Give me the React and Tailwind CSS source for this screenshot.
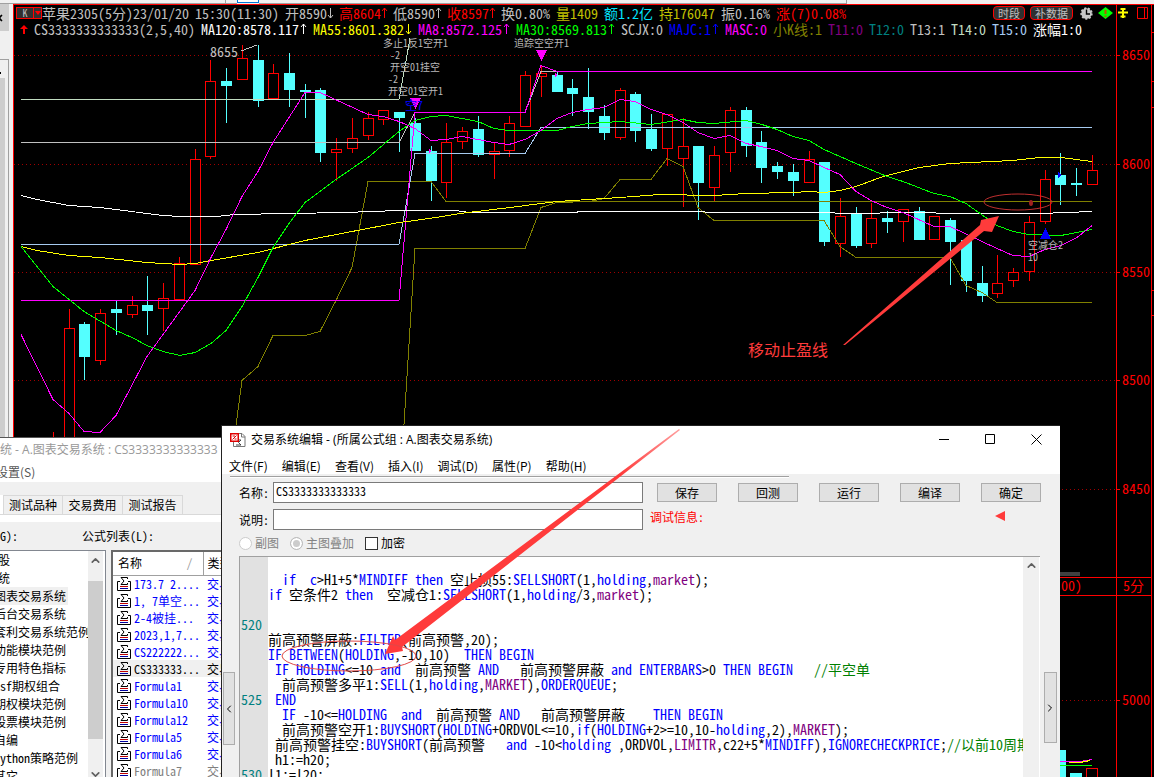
import React from 'react';
import { ChevronDown, ChevronLeft, ChevronRight, ChevronUp, X } from 'lucide-react';

// [centre x, body top, body bottom, high, low, rising]
const candles = [
  [53, 440, 440, 432, 440, 1], [69, 328, 440, 309, 440, 1], [84, 324, 357, 322, 380, 0],
  [100, 313, 361, 309, 365, 1], [116, 309, 313, 301, 335, 0], [132, 305, 315, 296, 318, 1],
  [147, 305, 311, 276, 335, 0], [163, 298, 309, 283, 331, 1], [179, 263, 300, 257, 300, 1],
  [195, 159, 265, 149, 265, 1], [210, 81, 157, 60, 159, 1], [226, 81, 86, 68, 123, 0],
  [242, 58, 80, 45, 80, 1], [258, 60, 101, 45, 107, 0], [273, 73, 99, 64, 99, 1],
  [289, 73, 90, 53, 107, 0], [305, 90, 92, 84, 118, 0], [320, 90, 153, 88, 162, 0],
  [336, 149, 153, 138, 181, 1], [352, 138, 149, 118, 153, 1], [368, 118, 136, 112, 140, 1],
  [383, 110, 120, 110, 125, 1], [399, 112, 118, 112, 152, 0], [415, 123, 151, 118, 151, 0],
  [431, 151, 181, 146, 201, 0], [446, 142, 183, 123, 198, 1], [462, 131, 142, 127, 149, 1],
  [478, 129, 155, 116, 157, 0], [494, 151, 155, 143, 179, 1], [509, 123, 151, 116, 157, 1],
  [525, 75, 127, 71, 127, 1], [541, 73, 77, 65, 97, 1], [557, 75, 92, 71, 92, 0],
  [572, 88, 94, 79, 116, 0], [588, 97, 112, 68, 129, 0], [604, 116, 133, 105, 140, 0],
  [620, 90, 138, 88, 140, 1], [635, 94, 131, 92, 142, 0], [651, 129, 149, 114, 151, 0],
  [667, 114, 149, 114, 166, 1], [683, 146, 159, 118, 207, 1], [698, 146, 183, 146, 220, 0],
  [714, 155, 188, 146, 201, 1], [730, 110, 153, 107, 172, 1], [746, 110, 146, 107, 157, 0],
  [761, 142, 168, 131, 183, 0], [777, 166, 172, 162, 179, 0], [793, 172, 181, 164, 196, 0],
  [809, 159, 183, 151, 183, 1], [824, 162, 242, 162, 246, 0], [840, 216, 244, 198, 257, 1],
  [856, 214, 246, 207, 248, 0], [871, 218, 244, 203, 248, 1], [887, 218, 222, 211, 233, 0],
  [903, 209, 222, 209, 242, 1], [919, 211, 240, 207, 240, 0], [934, 216, 240, 216, 240, 1],
  [950, 220, 242, 218, 285, 0], [966, 240, 281, 240, 292, 0], [982, 283, 296, 266, 302, 0],
  [997, 283, 294, 255, 298, 1], [1013, 272, 281, 268, 287, 1], [1029, 222, 272, 216, 281, 1],
  [1045, 179, 222, 170, 224, 1], [1060, 175, 185, 153, 205, 0], [1076, 183, 185, 168, 196, 0],
  [1092, 170, 185, 155, 185, 1],
];

const lines = [
  { color: '#808000', points: '234,440 242,380 258,366 273,335 305,335 320,331 336,300 352,267 368,181 431,181 446,201 1092,201' },
  { color: '#808000', points: '403,440 415,248 525,248 541,207 557,202 590,201 604,198 620,179 651,179 667,158 683,166 698,207 714,220 824,220 840,246 856,257 950,257 966,285 982,292 997,302 1092,302' },
  { color: '#c0dcc0', points: '21,99 399,99 410,38' },
  { color: '#c0c0c0', points: '21,142 399,142 415,112' },
  { color: '#c0c0c0', points: '525,112 541,71 557,71' },
  { color: '#a6caf0', points: '21,244 399,244 415,153 525,153 541,127 1092,127' },
  { color: '#ff00ff', points: '21,300 399,300 415,112 525,112 541,65 557,71 1092,71' },
  { color: '#ffffff', points: '21,195 37,199 69,205 100,207 163,215 180,216 217,216 234,214 345,212 399,210 455,210 470,212 690,211 720,212 830,212 840,213 870,213 890,212 980,213 1040,213 1092,211' },
  { color: '#ffff00', points: '21,246 37,250 69,255 100,257 147,262 180,264 195,263 211,260 258,252 305,240 352,231 399,222 415,220 436,217 460,213 510,207 541,203 557,201 620,197 660,194 714,195 746,193 793,192 809,191 824,192 840,190 856,186 883,176 919,167 950,163 1013,160 1040,157 1061,157 1092,161' },
  { color: '#00ff00', points: '21,246 53,286 84,311 116,330 132,337 147,345 163,351 180,355 195,352 211,343 226,330 242,306 258,277 273,247 289,223 305,202 336,179 368,157 399,131 415,120 431,116 446,115 478,121 494,128 509,130 557,130 572,126 588,123 620,121 651,124 683,119 698,122 714,123 746,120 762,124 777,129 793,136 809,140 824,149 856,163 887,176 903,181 934,193 950,196 966,203 997,225 1013,231 1029,234 1061,235 1092,229' },
  { color: '#ff00ff', points: '21,334 53,399 69,413 84,431 100,432 116,415 147,356 163,334 195,290 211,257 226,229 242,196 258,171 273,142 289,117 305,92 320,92 368,114 383,116 399,121 415,128 431,140 446,139 462,136 478,139 494,142 509,144 525,139 541,130 557,118 572,112 588,109 604,107 620,99 635,101 651,109 667,114 683,122 698,132 714,138 730,135 746,143 761,146 777,150 793,158 809,160 824,167 840,174 856,191 871,200 887,207 903,212 934,226 950,226 997,248 1013,255 1029,256 1045,249 1061,245 1077,237 1092,225' },
];

const prices = [[8650, 55], [8600, 164], [8550, 272], [8500, 380], [8450, 489], [5000, 700]];

const notes = [
  [383, 47, '多止1反1空开1'], [390, 59, '-2'], [390, 71, '开空01挂空'], [388, 83, '-2'],
  [388, 95, '开空01空开1'], [514, 47, '追踪空空开1'], [1028, 249, '空减仓2'], [1028, 261, '10'],
];

const quote = [
  { text: '苹果2305(5分)', color: 'text-[#c0c0c0] -mr-1.5' },
  { text: '23/01/20', color: 'text-[#c0c0c0]' },
  { text: '15:30(11:30)', color: 'text-[#c0c0c0]' },
  { text: '开8590', color: 'text-[#c0c0c0]', arrow: 'down' },
  { text: '高8604', color: 'text-[#ff0000]', arrow: 'up' },
  { text: '低8590', color: 'text-[#c0c0c0]', arrow: 'up' },
  { text: '收8597', color: 'text-[#ff0000]', arrow: 'up' },
  { text: '换0.80%', color: 'text-[#c0c0c0]' },
  { text: '量1409', color: 'text-[#c0c000]' },
  { text: '额1.2亿', color: 'text-[#00e5ff]' },
  { text: '持176047', color: 'text-[#c0c000]' },
  { text: '振0.16%', color: 'text-[#c0c0c0]' },
  { text: '涨(7)0.08%', color: 'text-[#ff0000]' },
];

const indicators = [
  { text: 'CS3333333333333(2,5,40)', color: 'text-[#c0c0c0]' },
  { text: 'MA120:8578.117', color: 'text-white', arrow: 'up' },
  { text: 'MA55:8601.382', color: 'text-[#ffff00]', arrow: 'down' },
  { text: 'MA8:8572.125', color: 'text-[#ff00ff]', arrow: 'up' },
  { text: 'MA30:8569.813', color: 'text-[#00ff00]', arrow: 'up' },
  { text: 'SCJX:0', color: 'text-[#c0c0c0]' },
  { text: 'MAJC:1', color: 'text-[#0000ff]', arrow: 'up' },
  { text: 'MASC:0', color: 'text-[#ff00ff]' },
  { text: '小K线:1', color: 'text-[#808000]' },
  { text: 'T11:0', color: 'text-[#800080]' },
  { text: 'T12:0', color: 'text-[#008080]' },
  { text: 'T13:1', color: 'text-[#c0c0c0]' },
  { text: 'T14:0', color: 'text-[#c0dcc0]' },
  { text: 'T15:0', color: 'text-[#a6caf0]' },
  { text: '涨幅1:0', color: 'text-white' },
];

const groups = ['图表交易系统', '后台交易系统', '套利交易系统范例', '功能模块范例', '专用特色指标', 'Csf期权组合', '期权模块范例', '股票模块范例', '自编', 'Python策略范例', '其它'];

const formulas = ['173.7 2....', '1, 7单空...', '2-4被挂...', '2023,1,7...', 'CS222222...', 'CS333333...', 'Formula1', 'Formula10', 'Formula12', 'Formula5', 'Formula6', 'Formula7'];

const code = [
  '',
  '  if  c>H1+5*MINDIFF then 空止损55:SELLSHORT(1,holding,market);',
  'if 空条件2 then  空减仓1:SELLSHORT(1,holding/3,market);',
  '',
  '',
  '前高预警屏蔽:FILTER(前高预警,20);',
  'IF BETWEEN(HOLDING,-10,10)  THEN BEGIN',
  ' IF HOLDING<=10 and  前高预警 AND   前高预警屏蔽 and ENTERBARS>0 THEN BEGIN   //平空单',
  '  前高预警多平1:SELL(1,holding,MARKET),ORDERQUEUE;',
  ' END',
  '  IF -10<=HOLDING  and  前高预警 AND   前高预警屏蔽    THEN BEGIN',
  '  前高预警空开1:BUYSHORT(HOLDING+ORDVOL<=10,if(HOLDING+2>=10,10-holding,2),MARKET);',
  ' 前高预警挂空:BUYSHORT(前高预警   and -10<holding ,ORDVOL,LIMITR,c22+5*MINDIFF),IGNORECHECKPRICE;//以前10周期',
  ' h1:=h20;',
  'l1:=l20;',
];

const FIRST_LINE = 516;
const blueWords = ['if', 'c', 'then', 'mindiff', 'sellshort', 'holding', 'filter', 'between', 'begin', 'and', 'enterbars', 'sell', 'orderqueue', 'end', 'buyshort', 'ignorecheckprice'];
const purpleWords = ['market', 'limitr'];

function tokenColor(token) {
  const word = token.toLowerCase();
  if (token.startsWith('//')) return 'text-[#008000]';
  if (blueWords.includes(word)) return 'text-[#0000ff]';
  if (purpleWords.includes(word)) return 'text-[#800080]';
  return 'text-black';
}

function CodeLine({ text }) {
  const tokens = text.match(/\/\/.*|[A-Za-z][A-Za-z0-9]*|[^A-Za-z/]+|\//g) || [];
  return (
    <div className="h-[15px]">
      {tokens.map((token, i) => (
        <span key={i} className={tokenColor(token)}>{token}</span>
      ))}
    </div>
  );
}

function TrendArrow({ dir, className }) {
  return (
    <svg viewBox="0 0 6 12" className={`${className} h-3 overflow-visible`} fill="none" stroke="currentColor">
      <path d={dir === 'up' ? 'M3.5 11V1M1 4L3.5 1L6 4' : 'M3.5 1V11M1 8L3.5 11L6 8'} />
    </svg>
  );
}

function DataRow({ items, arrowClass }) {
  return items.map((item) => (
    <span key={item.text} className={`flex items-center whitespace-pre ${item.color}`}>
      {item.text}
      {item.arrow && <TrendArrow dir={item.arrow} className={arrowClass} />}
    </span>
  ));
}

function ChartCanvas() {
  return (
    <svg viewBox="14 5 1140 772" preserveAspectRatio="xMinYMin slice" className="block w-full h-full [grid-area:1/1]" shapeRendering="crispEdges">
      {prices.map(([price, y]) => (
        <g key={price}>
          <line x1="14" x2="1116" y1={y + 0.5} y2={y + 0.5} stroke="#a00000" strokeDasharray="1 3" />
          <line x1="1116" x2="1120" y1={y + 0.5} y2={y + 0.5} stroke="#ff0000" />
          <text x="1122" y={y + 5} fontSize="14" fill="#ff0000">{price}</text>
        </g>
      ))}

      {candles.map(([x, top, bottom, high, low, up]) => (
        <g key={x} stroke={up ? '#ff0000' : '#54ffff'} fill={up ? '#000' : '#54ffff'}>
          <line x1={x + 0.5} x2={x + 0.5} y1={high} y2={low} />
          {bottom > top && <rect x={x - 4.5} y={top + 0.5} width="10" height={Math.max(bottom - top - 1, 1)} />}
        </g>
      ))}

      <g fill="none">
        {lines.map((line) => (
          <polyline key={line.points} points={line.points} stroke={line.color} transform="translate(0 0.5)" />
        ))}
      </g>

      <line x1="241" y1="51" x2="257" y2="45" stroke="#c0c0c0" />
      <text x="210" y="57" fontSize="14" fill="#c0c0c0">8655</text>
      <g fill="#b8b8b8" fontSize="10">
        {notes.map(([x, y, text]) => (
          <text key={`${x}-${y}`} x={x} y={y}>{text}</text>
        ))}
      </g>
      <polygon points="536,50 547,50 541.5,61" fill="#ff00ff" />
      <polygon points="410,98 421,98 415.5,109" fill="#ff00ff" />
      <text x="405" y="110" fontSize="12" fill="#0000ff">空7</text>
      <polygon points="429,149 432,151 429,153" fill="#ff00ff" />
      <polygon points="555,73 558,75 555,77" fill="#ff00ff" />
      <polygon points="1040,239 1051,239 1045.5,228" fill="#0000ff" />
      <polygon points="1058,172 1061,175 1058,178" fill="#0000ff" />

      {/* Axis frame */}
      <g stroke="#ff0000">
        <path d="M1116.5 5V777M1151.5 5V777" />
        <path d="M1151 32.5H1154M1151 81.5H1154M1151 107.5H1154M1151 290.5H1154M1151 315.5H1154" />
        <path d="M14 577.5H1151M14 595.5H1151" />
      </g>
      <rect x="1040" y="572" width="40" height="4" fill="#404040" />
      <text x="1061" y="591" fontSize="14" fill="#ff0000">00)</text>
      <text x="1123" y="591" fontSize="14" fill="#ff0000">5分</text>

      {/* Volume pane */}
      <rect x="1055" y="750" width="11" height="27" fill="#54ffff" />
      <rect x="1070" y="773" width="12" height="4" fill="#54ffff" />
      <rect x="1086.5" y="768.5" width="11" height="20" stroke="#ff0000" fill="none" />
      <path d="M1055 761.5H1080L1092 759.5" stroke="#ff00ff" fill="none" />
      <path d="M1069 762.5H1080L1090 760.5" stroke="#ffff00" fill="none" />
      <path d="M1055 765.5H1092" stroke="#00ff00" />
    </svg>
  );
}

function ChartHeader() {
  return (
    <header className="[grid-area:1/1] self-start text-[14px] leading-4">
      <div className="flex items-center h-4 pl-0.5">
        <button className="flex h-3 w-[26px] items-stretch border border-[#ff0000] bg-[#303030]" aria-label="K">
          <span className="flex-1 text-[10px] leading-[10px] text-[#c0c0c0]">K</span>
          <span className="flex w-2 items-center justify-center border-l border-[#ff0000]">
            <svg viewBox="0 0 6 4" className="w-1.5 h-1"><path d="M0 0H6L3 4Z" fill="#ff0000" /></svg>
          </span>
        </button>
        <div className="flex min-w-0 flex-1 gap-1.5">
          <DataRow items={quote} arrowClass="w-1.5" />
        </div>
        <div className="flex items-center gap-[5px]">
          <button className="h-[14px] w-8 rounded-sm border border-[#ff0000] bg-[#303030] text-[11px] leading-3 text-[#c0c0c0]">时段</button>
          <button className="h-[14px] w-[43px] rounded-sm border border-[#ff0000] bg-[#303030] text-[11px] leading-3 text-[#c0c0c0]">补数据</button>
          <button aria-label="时间" className="ml-0.5">
            <svg viewBox="0 0 13 13" className="size-[13px]">
              <circle cx="6.5" cy="6.5" r="5.2" fill="#c8c8c8" stroke="#c8c8c8" strokeWidth="2" strokeDasharray="2 1.6" />
              <path d="M6.5 2.5V7H10" stroke="#000" strokeWidth="1.4" fill="none" />
            </svg>
          </button>
          <button aria-label="提示">
            <svg viewBox="0 0 15 12" className="h-3 w-[15px]">
              <path d="M7.5 0L15 6L7.5 12L0 6Z" fill="#00ff00" />
              <path d="M7.5 3V7M7.5 8.5V10" stroke="#c05000" strokeWidth="2" />
            </svg>
          </button>
          <button aria-label="固定">
            <svg viewBox="0 0 10 10" className="size-2.5">
              <path d="M0 4.5H10M5 0V10M2.5 1H7.5M2.5 8.5H7.5" stroke="#ffff00" strokeWidth="2" fill="none" />
            </svg>
          </button>
          <button aria-label="窗口" className="ml-1 mr-[5px]">
            <svg viewBox="0 0 12 12" className="size-3" fill="none" stroke="#ff0000">
              <path d="M0.5 0.5H10.5V11.5H0.5ZM7.5 0.5V11.5" />
            </svg>
          </button>
        </div>
      </div>
      <div className="flex h-4 items-center gap-1.5 pl-1.5">
        <svg viewBox="0 0 8 9" className="h-[9px] w-2"><path d="M4 0L8 4H5V9H3V4H0Z" fill="#ff0000" /></svg>
        <DataRow items={indicators} arrowClass="w-2" />
      </div>
    </header>
  );
}

function TesterWindow() {
  return (
    <section className="absolute bottom-0 left-0 top-[437px] flex w-[300px] flex-col overflow-hidden border-t border-[#555] bg-[#f0f0f0] text-[12px] leading-4 text-black">
      <div className="whitespace-nowrap bg-white pt-1 text-[#999] [font-family:'Open_Sans','Noto_Sans_CJK_SC',sans-serif]">统 - A.图表交易系统 : CS3333333333333</div>
      <nav className="h-6 bg-white pt-1.5">
        <a href="#settings" className="-ml-1 text-[#555]">设置(S)</a>
      </nav>
      <div className="mt-[13px] flex h-5 border-b border-[#d9d9d9] bg-[#f0f0f0]" role="tablist">
        <span className="w-[3px] bg-white"></span>
        {['测试品种', '交易费用', '测试报告'].map((tab) => (
          <button key={tab} role="tab" className="w-[60px] border border-b-0 border-l-0 border-[#d9d9d9] first-of-type:border-l">{tab}</button>
        ))}
      </div>
      <div className="h-[7px] shrink-0 bg-white"></div>
      <div className="flex h-[28px] shrink-0 items-center gap-[62px] [font-family:'Noto_Sans_Mono_CJK_SC','Noto_Sans_CJK_SC','Liberation_Mono',monospace]">
        <span className="w-5">G):</span>
        <span>公式列表(L):</span>
      </div>
      <div className="flex min-h-0 flex-1 gap-[5px] [font-family:'Noto_Sans_Mono_CJK_SC','Noto_Sans_CJK_SC','Liberation_Mono',monospace]">
        <div className="flex w-[106px] shrink-0 overflow-hidden border-r border-t border-[#828790] bg-white">
          <ul className="min-w-0 flex-1 whitespace-nowrap leading-[18px]">
            <li className="-ml-0.5">股</li>
            <li className="-ml-0.5">统</li>
            {groups.map((name, i) => (
              <li key={name} className="flex"><span className={`-ml-1.5 ${i === 0 ? 'bg-[#f0f0f0] pr-0.5' : ''}`}>{name}</span></li>
            ))}
          </ul>
          <div className="mr-0.5 flex w-[15px] flex-col items-center bg-[#f0f0f0] text-[#606060]">
            <ChevronUp size={13} strokeWidth={3} className="mb-[14px] mt-[3px] shrink-0" />
            <div className="w-full flex-1 bg-[#cdcdcd]"></div>
            <ChevronDown size={13} strokeWidth={3} className="-mb-1 mt-[29px] shrink-0" />
          </div>
        </div>
        <div className="flex-1 overflow-hidden border-l-2 border-t-2 border-[#696969] bg-white">
          <table className="w-full table-fixed border-collapse whitespace-nowrap text-left">
            <thead>
              <tr className="h-[23px] border-b border-[#a0a0a0]">
                <th className="w-[90px] border-r border-[#a0a0a0] pl-[5px] font-normal">
                  <span className="flex justify-between pr-2.5">名称<span className="text-[#999]">/</span></span>
                </th>
                <th className="pl-1 font-normal">类型</th>
              </tr>
            </thead>
            <tbody>
              {formulas.map((name) => (
                <tr
                  key={name}
                  className={name === 'CS333333...' ? 'h-[17px] bg-[#f0f0f0] text-black' : name === 'Formula7' ? 'h-[17px] text-[#808080]' : 'h-[17px] text-[#0000ff]'}
                >
                  <td className="p-0">
                    <span className="flex items-center gap-0.5 whitespace-pre pl-1">
                      <svg viewBox="0 0 15 15" className="size-[15px] shrink-0" fill="none">
                        <path d="M3 5.5H.5V14.5H13.5V5.5H11" stroke="#000" />
                        <path d="M10.5 3V1.5H4L7 5L4 8.500H10.500V7" stroke="#000" />
                        <path d="M3 10.500H11" stroke="#c00000" />
                        <path d="M3 12.500H11" stroke="#0000a0" />
                      </svg>
                      {name}
                    </span>
                  </td>
                  <td className="py-0 pl-1">交易</td>
                </tr>
              ))}
            </tbody>
          </table>
        </div>
      </div>
    </section>
  );
}

function EditorWindow() {
  return (
    <section className="absolute bottom-0 left-[221px] right-[94px] top-[425px] flex flex-col overflow-hidden border-l border-t border-[#222] bg-[#f0f0f0] text-[12px] leading-4 text-black">
      <div className="flex h-[27px] shrink-0 items-center bg-white pl-2">
        <svg viewBox="0 0 16 16" className="mr-[5px] size-4" fill="none">
          <path d="M5.5 1.5H12L15 4.5V14.5H3.5V10" stroke="#777" />
          <path d="M11.5 1.5V5H15" stroke="#777" />
          <path d="M6 8H11L8.500 10.500L11 13H6" stroke="#444" />
          <rect x=".75" y="1.750" width="7.500" height="7.500" fill="#fff" stroke="#e00000" strokeWidth="1.500" />
          <path d="M2.500 7.500L6.500 3.500M2.500 4H5M4.500 7H6.500" stroke="#e00000" />
        </svg>
        <h1 className="flex-1 whitespace-pre [font-family:'Open_Sans','Noto_Sans_CJK_SC',sans-serif]">交易系统编辑 - (所属公式组 : A.图表交易系统)</h1>
        <div className="flex gap-[35px] pr-[18px]">
          <button aria-label="最小化">
            <svg viewBox="0 0 11 11" className="size-[11px]"><path d="M0 5.5H10" stroke="#000" /></svg>
          </button>
          <button aria-label="最大化">
            <svg viewBox="0 0 11 11" className="size-[11px]"><path d="M.5 .5H9.5V9.5H.5Z" stroke="#000" fill="none" /></svg>
          </button>
          <button aria-label="关闭">
            <svg viewBox="0 0 11 11" className="size-[11px]"><path d="M.5 .5L10.5 10.5M10.5 .5L.5 10.5" stroke="#000" /></svg>
          </button>
        </div>
      </div>
      <nav className="flex h-[21px] shrink-0 items-center gap-[14px] bg-white pl-[7px] pt-1">
        {['文件(F)', '编辑(E)', '查看(V)', '插入(I)', '调试(D)', '属性(P)', '帮助(H)'].map((item) => (
          <a key={item} href="#menu">{item}</a>
        ))}
      </nav>
      <div className="ml-2 mt-0.5 h-0.5 w-2/3 shrink-0 border-b border-t border-b-white border-t-[#a0a0a0]"></div>

      <form className="flex shrink-0 flex-col gap-1.5 pb-1.5 pl-[17px] pr-[19px] pt-1 [font-family:'Noto_Sans_Mono_CJK_SC','Noto_Sans_CJK_SC','Liberation_Mono',monospace]">
        <div className="flex gap-[7px]">
          <div className="flex flex-1 items-center">
            <label htmlFor="name" className="w-[34px]">名称:</label>
            <input id="name" defaultValue="CS3333333333333" className="h-[21px] min-w-0 flex-1 border border-[#7a7a7a] bg-white px-0.5 pb-1" />
          </div>
          <div className="flex w-[391px] items-center justify-between pl-[7px]">
            {['保存', '回测', '运行', '编译', '确定'].map((name) => (
              <button key={name} type="button" className="h-[19px] w-[60px] border border-[#adadad] bg-[#e1e1e1] leading-4">{name}</button>
            ))}
          </div>
        </div>
        <div className="flex gap-[7px]">
          <div className="flex flex-1 items-center">
            <label htmlFor="desc" className="w-[34px]">说明:</label>
            <input id="desc" className="h-[21px] min-w-0 flex-1 border border-[#7a7a7a] bg-white px-0.5" />
          </div>
          <div className="flex w-[391px] justify-between pr-9">
            <span className="text-[#ff0000]">调试信息:</span>
            <svg viewBox="0 0 10 10" className="mt-0.5 size-2.5"><path d="M0 5L10 0V10Z" fill="#ff3b3b" /></svg>
          </div>
        </div>
        <div className="flex h-[14px] items-center text-[#838383]">
          <input id="sub" type="radio" name="view" disabled className="mr-[3px] size-[13px] appearance-none rounded-full border border-[#ccc] bg-white" />
          <label htmlFor="sub" className="mr-[11px]">副图</label>
          <input id="main" type="radio" name="view" disabled defaultChecked className="mr-[3px] size-[13px] appearance-none rounded-full border border-[#bbb] bg-[#ccc] shadow-[inset_0_0_0_2px_white]" />
          <label htmlFor="main" className="mr-[11px]">主图叠加</label>
          <input id="lock" type="checkbox" className="mr-[3px] size-[13px] appearance-none border border-[#333] bg-white" />
          <label htmlFor="lock" className="text-black">加密</label>
        </div>
      </form>

      <div className="flex min-h-0 flex-1 items-start">
        <div className="flex w-[17px] shrink-0 pl-px pt-[116px]">
          <button aria-label="上一个" className="flex h-[73px] w-3 items-center justify-center border border-[#adadad] bg-[#e1e1e1]">
            <ChevronLeft size={12} className="shrink-0" />
          </button>
        </div>
        <div className="flex h-full min-w-0 flex-1 overflow-hidden border-l border-t border-[#a0a0a0] bg-white text-[14px] leading-[15px] [font-family:'Noto_Sans_Mono_CJK_SC','Noto_Sans_CJK_SC','Liberation_Mono',monospace]">
          <div className="w-7 shrink-0 bg-[#e1e1e1] pl-px text-[#008080]">
            {code.map((_, i) => (
              <div key={i} className="h-[15px]">{(FIRST_LINE + i) % 5 === 0 ? FIRST_LINE + i : ''}</div>
            ))}
          </div>
          <pre className="min-w-0 flex-1 overflow-hidden [font-family:inherit]">
            {code.map((text, i) => <CodeLine key={i} text={text} />)}
          </pre>
          <div className="flex w-[17px] shrink-0 justify-center border-r border-white bg-[#f0f0f0] pt-0.5 text-[#606060]">
            <ChevronUp size={13} strokeWidth={3} />
          </div>
        </div>
        <div className="flex w-5 shrink-0 justify-center pt-[116px]">
          <button aria-label="下一个" className="flex h-[71px] w-[13px] items-center justify-center border border-[#adadad] bg-[#e1e1e1]">
            <ChevronRight size={12} className="shrink-0" />
          </button>
        </div>
      </div>
    </section>
  );
}

function Annotations() {
  return (
    <svg viewBox="0 0 1154 777" preserveAspectRatio="xMinYMin slice" className="pointer-events-none absolute inset-0 h-full w-full">
      <defs>
        <linearGradient id="fade" gradientUnits="userSpaceOnUse" x1="680" y1="430" x2="620" y2="475">
          <stop offset="0" stopColor="#ff3b3b" stopOpacity="0.5" />
          <stop offset="1" stopColor="#ff3b3b" />
        </linearGradient>
      </defs>
      <polygon points="679,429 680,430 402,647 403,651 385,654 393,636 395,640" fill="url(#fade)" />
      <polygon points="843,345 845,345 984,231 992,232 999,216 981,220 980,225" fill="#ff3b3b" />
      <ellipse cx="349" cy="656" rx="67" ry="15" fill="none" stroke="#e04848" />
      <ellipse cx="1018" cy="202" rx="34" ry="8" fill="none" stroke="#c03030" />
      <ellipse cx="1031" cy="203" rx="2" ry="3" fill="#a02020" />
      <text x="748" y="356" fontSize="16" fill="#ff3b3b">移动止盈线</text>
    </svg>
  );
}

export default function App() {
  return (
    <div className="relative flex h-screen w-full flex-col overflow-hidden bg-black [font-family:'Noto_Sans_CJK_SC','Liberation_Sans',sans-serif]">
      <div className="flex h-1 shrink-0 bg-[#f0f0f0]">
        <div className="w-[226px] border-b border-r border-[#a0a0a0]"></div>
        <div className="w-[11px] border-b border-[#a0a0a0]"></div>
        <div className="h-[3px] w-[22px] border border-t-0 border-[#0078d7] bg-white"></div>
        <div className="w-[588px] border-b border-r border-[#a0a0a0]"></div>
      </div>
      <div className="flex min-h-0 flex-1">
        <div className="flex w-[13px] shrink-0 flex-col bg-[#f0f0f0]">
          <div className="flex h-[27px] w-[9px] items-center overflow-hidden bg-[#cdcdcd]">
            <X size={10} strokeWidth={4} className="-ml-1.5 shrink-0" />
          </div>
          <div className="mt-7 flex w-[9px] flex-1 flex-col border-r border-t border-[#a0a0a0]">
            <div className="mt-3 h-0.5 w-px bg-black"></div>
            <div className="mt-1 w-[5px] flex-1 bg-[#cdcdcd]"></div>
          </div>
        </div>
        <main className="grid min-w-0 flex-1 grid-cols-1 grid-rows-1 overflow-hidden border-l border-t border-[#ff0000] [font-family:'Noto_Sans_Mono_CJK_SC','Noto_Sans_CJK_SC','Liberation_Mono',monospace]">
          <ChartCanvas />
          <ChartHeader />
        </main>
      </div>
      <TesterWindow />
      <EditorWindow />
      <Annotations />
    </div>
  );
}
